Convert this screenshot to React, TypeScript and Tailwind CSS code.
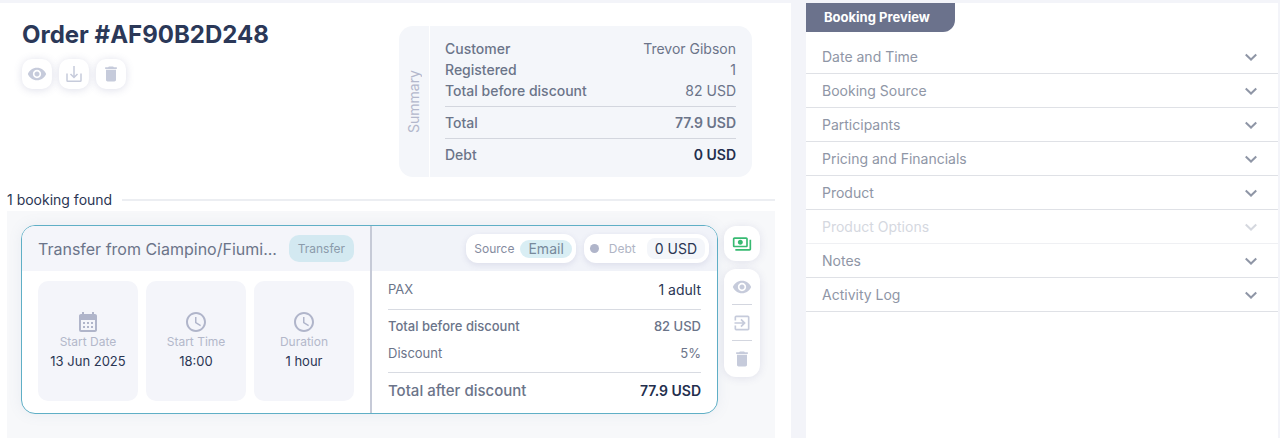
import React from 'react';
import {
  MdCalendarMonth,
  MdDelete,
  MdExitToApp,
  MdOutlinePayments,
  MdRemoveRedEye,
  MdSchedule,
} from 'react-icons/md';

interface Section {
  title: string;
  disabled?: boolean;
}

interface InfoTileProps {
  icon: React.ReactNode;
  label: string;
  value: string;
}

interface IconButtonProps {
  label: string;
  children: React.ReactNode;
}

const sections: Section[] = [
  { title: 'Date and Time' },
  { title: 'Booking Source' },
  { title: 'Participants' },
  { title: 'Pricing and Financials' },
  { title: 'Product' },
  { title: 'Product Options', disabled: true },
  { title: 'Notes' },
  { title: 'Activity Log' },
];

const DownloadIcon = () => (
  <svg width="18" height="18" viewBox="0 0 18 18" fill="none" stroke="currentColor" strokeWidth="1.5">
    <path d="M2 8.5v7a.75.75 0 0 0 .75.75h12.5a.75.75 0 0 0 .75-.75v-7" />
    <path d="M9 1v11M5.5 9 9 12.5 12.5 9" />
  </svg>
);

const ChevronIcon = () => (
  <svg width="14" height="14" viewBox="0 0 14 14" fill="none" stroke="currentColor" strokeWidth="2">
    <path d="M1.75 4.5 7 9.5l5.25-5" />
  </svg>
);

const HeaderButton: React.FC<IconButtonProps> = ({ label, children }) => (
  <button
    type="button"
    aria-label={label}
    className="flex size-[30px] items-center justify-center rounded-[10px] bg-white text-[#c6cbdb] shadow-[0_1px_8px_rgba(90,95,150,0.2)]"
  >
    {children}
  </button>
);

const SideButton: React.FC<IconButtonProps> = ({ label, children }) => (
  <button type="button" aria-label={label} className="flex h-9 w-5 items-center justify-center">
    {children}
  </button>
);

const InfoTile: React.FC<InfoTileProps> = ({ icon, label, value }) => (
  <div className="flex flex-1 flex-col items-center justify-center rounded-[10px] bg-[#f4f5fa]">
    <span className="text-[#b0b5ca]">{icon}</span>
    <span className="text-xs leading-4 text-[#b3b8ca]">{label}</span>
    <span className="text-[13px] leading-[22px] whitespace-nowrap text-[#2b3654]">{value}</span>
  </div>
);

const Summary = () => (
  <section className="flex w-[353px] rounded-[14px] bg-[#f4f6fa]">
    <div className="flex w-[31px] items-center justify-center border-r border-white">
      <h2 className="rotate-180 text-sm text-[#b3b8cc] [writing-mode:vertical-rl]">Summary</h2>
    </div>
    <dl className="flex-1 pt-3 pr-4 pb-2 pl-[15px] text-sm leading-[21px] text-[#6b7489]">
      <div className="flex justify-between">
        <dt className="font-medium">Customer</dt>
        <dd>Trevor Gibson</dd>
      </div>
      <div className="flex justify-between">
        <dt className="font-medium">Registered</dt>
        <dd>1</dd>
      </div>
      <div className="flex justify-between pb-[5px]">
        <dt className="font-medium">Total before discount</dt>
        <dd>82 USD</dd>
      </div>
      <div className="flex h-8 items-center justify-between border-t border-[#d3d6de]">
        <dt className="font-medium">Total</dt>
        <dd className="font-semibold">77.9 USD</dd>
      </div>
      <div className="flex h-[31px] items-center justify-between border-t border-[#d3d6de]">
        <dt className="font-medium">Debt</dt>
        <dd className="font-semibold text-[#232e4d]">0 USD</dd>
      </div>
    </dl>
  </section>
);

const BookingCard = () => (
  <article className="flex flex-1 overflow-hidden rounded-[14px] border border-[#5fafc6] bg-white shadow-[0_0_14px_rgba(110,130,170,0.1)]">
    <div className="flex w-[350px] flex-col border-r-2 border-[#c6cad7]">
      <div className="flex h-[45px] items-center justify-between gap-2 bg-[#f4f5fa] px-4">
        <h3 className="truncate text-base text-[#6b7489]">Transfer from Ciampino/Fiumi...</h3>
        <span className="rounded-[10px] bg-[#d3e9f1] px-[9px] text-xs leading-[27px] text-[#8b9bab]">
          Transfer
        </span>
      </div>
      <div className="flex flex-1 gap-2 px-4 pt-[10px] pb-3">
        <InfoTile icon={<MdCalendarMonth size={24} />} label="Start Date" value="13 Jun 2025" />
        <InfoTile icon={<MdSchedule size={24} />} label="Start Time" value="18:00" />
        <InfoTile icon={<MdSchedule size={24} />} label="Duration" value="1 hour" />
      </div>
    </div>

    <div className="flex-1">
      <div className="flex h-[45px] items-center justify-end gap-2 bg-[#f1f3f9] px-2">
        <div className="flex h-[29px] items-center gap-[6px] rounded-[12px] bg-white pr-1 pl-2 shadow-[0_2px_6px_rgba(90,95,150,0.14)]">
          <span className="text-xs text-[#858c9f]">Source</span>
          <span className="rounded-full bg-[#d9eef4] px-2 text-sm leading-[18px] text-[#77899b]">Email</span>
        </div>
        <div className="flex h-[29px] items-center rounded-[12px] bg-white pr-1 pl-[6px] shadow-[0_2px_6px_rgba(90,95,150,0.14)]">
          <span className="size-[9px] rounded-full bg-[#b0b5ca]" />
          <span className="ml-[10px] text-xs text-[#b0b5c5]">Debt</span>
          <span className="ml-[11px] rounded-lg bg-[#f4f6fa] px-2 text-sm leading-[21px] text-[#2b3654]">0 USD</span>
        </div>
      </div>
      <dl className="px-4 pb-1 text-[13px] text-[#6b7489]">
        <div className="flex h-[39px] items-center justify-between border-b border-[#d8dbe2]">
          <dt>PAX</dt>
          <dd className="text-sm text-[#2b3654]">1 adult</dd>
        </div>
        <div className="flex h-[34px] items-center justify-between font-medium">
          <dt>Total before discount</dt>
          <dd>82 USD</dd>
        </div>
        <div className="flex h-[29px] items-center justify-between border-b border-[#d8dbe2] pb-2">
          <dt>Discount</dt>
          <dd>5%</dd>
        </div>
        <div className="flex h-9 items-center justify-between text-sm font-medium">
          <dt className="text-[15px]">Total after discount</dt>
          <dd className="font-semibold text-[#232e4d]">77.9 USD</dd>
        </div>
      </dl>
    </div>
  </article>
);

const BookingActions = () => (
  <div className="flex w-9 flex-col gap-2 pt-px">
    <button
      type="button"
      aria-label="Payments"
      className="flex h-[35px] items-center justify-center rounded-[12px] bg-white text-[#37ba72] shadow-[0_1px_8px_rgba(90,95,150,0.14)]"
    >
      <MdOutlinePayments size={20} />
    </button>
    <div className="flex flex-col items-center divide-y divide-[#d3d6df] rounded-[12px] bg-white text-[#c6cbdb] shadow-[0_1px_8px_rgba(90,95,150,0.14)]">
      <SideButton label="View booking">
        <MdRemoveRedEye size={20} className="shrink-0" />
      </SideButton>
      <SideButton label="Open booking">
        <MdExitToApp size={20} className="shrink-0" />
      </SideButton>
      <SideButton label="Delete booking">
        <MdDelete size={20} className="shrink-0" />
      </SideButton>
    </div>
  </div>
);

const BookingPreview = () => (
  <aside className="bg-white">
    <h2 className="w-[149px] rounded-br-[12px] bg-[#6b728c] pl-[18px] text-[13px] leading-[29px] font-bold text-white">
      Booking Preview
    </h2>
    <div className="pt-2">
      {sections.map((section) => (
        <button
          key={section.title}
          type="button"
          disabled={section.disabled}
          aria-expanded={false}
          className="flex h-[34px] w-full items-center justify-between border-b border-[#dfe1e6] pr-5 pl-4 text-sm text-[#8f96a6] disabled:border-[#eff0f3] disabled:text-[#d5d8df]"
        >
          <span>{section.title}</span>
          <ChevronIcon />
        </button>
      ))}
    </div>
  </aside>
);

export default function App() {
  return (
    <div className="grid min-h-screen grid-cols-[791fr_472fr] gap-x-[15px] border-t-[3px] border-r-2 border-[#f3f4f9] bg-[#f3f4f9] font-['Inter','Liberation_Sans',sans-serif]">
      <main className="flex flex-col bg-white pr-4 pl-[7px]">
        <header className="flex items-start justify-between pr-[23px] pl-[15px]">
          <div className="pt-4">
            <h1 className="text-2xl leading-[32px] font-bold text-[#2b3858]">Order #AF90B2D248</h1>
            <div className="mt-2 flex gap-[7px]">
              <HeaderButton label="View order">
                <MdRemoveRedEye size={20} />
              </HeaderButton>
              <HeaderButton label="Download order">
                <DownloadIcon />
              </HeaderButton>
              <HeaderButton label="Delete order">
                <MdDelete size={20} />
              </HeaderButton>
            </div>
          </div>
          <div className="pt-[23px]">
            <Summary />
          </div>
        </header>

        <div className="mt-3 flex items-center gap-[10px]">
          <p className="text-sm leading-[22px] text-[#2b3654]">1 booking found</p>
          <div className="h-[2px] flex-1 bg-[#eceef2]" />
        </div>

        <div className="flex flex-1 items-start gap-[6px] bg-[#f7f8fa] pt-[14px] pr-[15px] pb-[22px] pl-[14px]">
          <BookingCard />
          <BookingActions />
        </div>
      </main>
      <BookingPreview />
    </div>
  );
}
